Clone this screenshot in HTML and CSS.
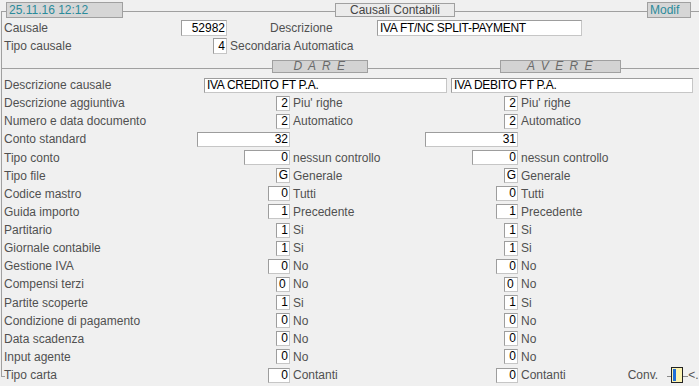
FILE: index.html
```html
<!DOCTYPE HTML>
<html>

<head>
    <meta charset="utf-8">
    <title>Causali Contabili</title>
    <link rel="stylesheet" href="styles.css">
</head>

<body>
<div class="frame">
    <div class="header">
        <div class="stamp">25.11.16 12:12</div>
        <div class="title">Causali Contabili</div>
        <div class="mode">Modif</div>
    </div>

    <div class="top">
        <div class="cell"><span>Causale</span><span class="box w46">52982</span></div>
        <span class="dlab">Descrizione</span>
        <span class="box text w205">IVA FT/NC SPLIT-PAYMENT</span>
        <div class="cell"><span>Tipo causale</span><span class="box w14">4</span></div>
        <span class="wide">Secondaria Automatica</span>
    </div>

    <div class="section">
        <div class="rule r1"></div>
        <div class="tag dare">D A R E</div>
        <div class="rule r2"></div>
        <div class="tag avere">A V E R E</div>
        <div class="rule r3"></div>
    </div>

    <div class="grid">
        <span class="lab">Descrizione causale</span>
        <div class="pair">
            <span class="box text w243">IVA CREDITO FT P.A.</span>
            <span class="box text w242">IVA DEBITO FT P.A.</span>
        </div>

        <span class="lab">Descrizione aggiuntiva</span>
        <div class="val"><span class="box w14">2</span></div><span class="txt">Piu' righe</span>
        <div class="val"><span class="box w14">2</span></div><span class="txt">Piu' righe</span>

        <span class="lab">Numero e data documento</span>
        <div class="val"><span class="box w14">2</span></div><span class="txt">Automatico</span>
        <div class="val"><span class="box w14">2</span></div><span class="txt">Automatico</span>

        <span class="lab">Conto standard</span>
        <div class="val"><span class="box w93">32</span></div><span class="txt"></span>
        <div class="val"><span class="box w93">31</span></div><span class="txt"></span>

        <span class="lab">Tipo conto</span>
        <div class="val"><span class="box w46">0</span></div><span class="txt">nessun controllo</span>
        <div class="val"><span class="box w46">0</span></div><span class="txt">nessun controllo</span>

        <span class="lab">Tipo file</span>
        <div class="val"><span class="box w14">G</span></div><span class="txt">Generale</span>
        <div class="val"><span class="box w14">G</span></div><span class="txt">Generale</span>

        <span class="lab">Codice mastro</span>
        <div class="val"><span class="box w22">0</span></div><span class="txt">Tutti</span>
        <div class="val"><span class="box w22">0</span></div><span class="txt">Tutti</span>

        <span class="lab">Guida importo</span>
        <div class="val"><span class="box w22">1</span></div><span class="txt">Precedente</span>
        <div class="val"><span class="box w22">1</span></div><span class="txt">Precedente</span>

        <span class="lab">Partitario</span>
        <div class="val"><span class="box w14">1</span></div><span class="txt">Si</span>
        <div class="val"><span class="box w14">1</span></div><span class="txt">Si</span>

        <span class="lab">Giornale contabile</span>
        <div class="val"><span class="box w14">1</span></div><span class="txt">Si</span>
        <div class="val"><span class="box w14">1</span></div><span class="txt">Si</span>

        <span class="lab">Gestione IVA</span>
        <div class="val"><span class="box w22">0</span></div><span class="txt">No</span>
        <div class="val"><span class="box w22">0</span></div><span class="txt">No</span>

        <span class="lab">Compensi terzi</span>
        <div class="val"><span class="box w14 left">0</span></div><span class="txt">No</span>
        <div class="val"><span class="box w14 left">0</span></div><span class="txt">No</span>

        <span class="lab">Partite scoperte</span>
        <div class="val"><span class="box w14">1</span></div><span class="txt">Si</span>
        <div class="val"><span class="box w14">1</span></div><span class="txt">Si</span>

        <span class="lab">Condizione di pagamento</span>
        <div class="val"><span class="box w14">0</span></div><span class="txt">No</span>
        <div class="val"><span class="box w14">0</span></div><span class="txt">No</span>

        <span class="lab">Data scadenza</span>
        <div class="val"><span class="box w14">0</span></div><span class="txt">No</span>
        <div class="val"><span class="box w14">0</span></div><span class="txt">No</span>

        <span class="lab">Input agente</span>
        <div class="val"><span class="box w14">0</span></div><span class="txt">No</span>
        <div class="val"><span class="box w14">0</span></div><span class="txt">No</span>

        <span class="lab">Tipo carta</span>
        <div class="val"><span class="box w22">0</span></div><span class="txt">Contanti</span>
        <div class="val"><span class="box w22">0</span></div>
        <div class="txt last">
            <span>Contanti</span>
            <span class="conv">Conv.</span>
            <svg class="conv-icon" width="21" height="17" viewBox="0 0 21 17">
                <line x1="0" y1="9.5" x2="4" y2="9.5" stroke="#8a8a8a"/>
                <rect x="4.5" y="0.5" width="11" height="15" fill="#fbf3b4" stroke="#222"/>
                <rect x="6" y="2" width="3" height="12" fill="#1f6fd8"/>
                <line x1="16" y1="9.5" x2="21" y2="9.5" stroke="#8a8a8a"/>
            </svg>
            <span class="more">&lt;..</span>
        </div>
    </div>
</div>
</body>

</html>
```

FILE: styles.css
```css
* {
    margin: 0;
    padding: 0;
    box-sizing: border-box;
}

body {
    width: 699px;
    height: 386px;
    overflow: hidden;
    background: #f0f0f0;
    font: 12px "Liberation Sans", Arial, sans-serif;
    color: #505050;
}

/* cornice del gruppo */
.frame {
    position: relative;
    margin: 11px 0 0 1px;
    height: 366px;
    border-top: 1px solid #a0a0a0;
    border-left: 1px solid #a0a0a0;
}

.frame::after {
    content: "";
    position: absolute;
    left: 0;
    bottom: 0;
    width: 3px;
    border-top: 1px solid #a0a0a0;
}

/* intestazione */
.header {
    display: flex;
    height: 16px;
    margin-top: -10px;
}

.stamp,
.mode {
    height: 16px;
    border: 1px solid #a0a0a0;
    background: #d6d6d6;
    color: #2b8b9b;
    padding-left: 2px;
    line-height: 14px;
}

.stamp {
    margin-left: 4px;
    width: 117px;
}

.mode {
    margin-left: 192px;
    width: 44px;
}

.title {
    margin: 1px 0 0 212px;
    width: 120px;
    height: 14px;
    border: 1px solid #a0a0a0;
    background: #ebebeb;
    color: #444;
    text-align: center;
    line-height: 12px;
}

/* causale */
.top {
    display: grid;
    grid-template-columns: 225px 150px 205px;
    grid-auto-rows: 18px;
    align-items: center;
    margin-top: 1px;
}

.cell {
    display: flex;
    align-items: center;
    justify-content: space-between;
    padding-left: 2px;
}

.dlab {
    padding-left: 43px;
}

.wide {
    grid-column: 2 / 4;
    padding-left: 3px;
}

/* DARE / AVERE */
.section {
    display: flex;
    height: 13px;
    margin-top: 5px;
}

.rule {
    height: 1px;
    margin-top: 8px;
    background: #a0a0a0;
}

.r1 {
    width: 270px;
}

.r2 {
    width: 132px;
}

.r3 {
    flex: 1;
}

.tag {
    height: 13px;
    border: 1px solid #a0a0a0;
    background: #d3d3d3;
    color: #6a6a6a;
    font-style: italic;
    letter-spacing: 1.5px;
    text-align: center;
    line-height: 11px;
}

.dare {
    width: 96px;
}

.avere {
    width: 121px;
}

/* righe */
.grid {
    display: grid;
    grid-template-columns: 195px 93px 135px 93px 1fr;
    grid-auto-rows: 18.125px;
    align-items: center;
    margin-top: 3px;
}

.lab {
    padding-left: 2px;
    white-space: nowrap;
}

.val {
    display: flex;
    justify-content: flex-end;
}

.txt {
    padding-left: 3px;
    white-space: nowrap;
}

.pair {
    grid-column: 2 / 6;
    display: flex;
    gap: 4px;
    padding-left: 7px;
}

.box {
    display: block;
    height: 15px;
    background: #fff;
    border: 1px solid #b4b4b4;
    border-color: #9d9d9d #c6c6c6 #c6c6c6 #9d9d9d;
    color: #000;
    line-height: 13px;
    text-align: right;
    padding-right: 1px;
    white-space: nowrap;
    overflow: hidden;
}

.top .box {
    height: 16px;
    line-height: 14px;
}

.box.text {
    text-align: left;
    padding-left: 2px;
    letter-spacing: -0.3px;
}

.box.left {
    text-align: left;
    padding-left: 2px;
}

.w14 { width: 14px; }
.w22 { width: 22px; }
.w46 { width: 46px; }
.w93 { width: 93px; }
.w205 { width: 205px; }
.w242 { width: 242px; }
.w243 { width: 243px; }

.last {
    display: flex;
    align-items: center;
}

.conv {
    margin-left: 62px;
}

.conv-icon {
    margin-left: 9px;
}

.more {
    color: #555;
}
```
